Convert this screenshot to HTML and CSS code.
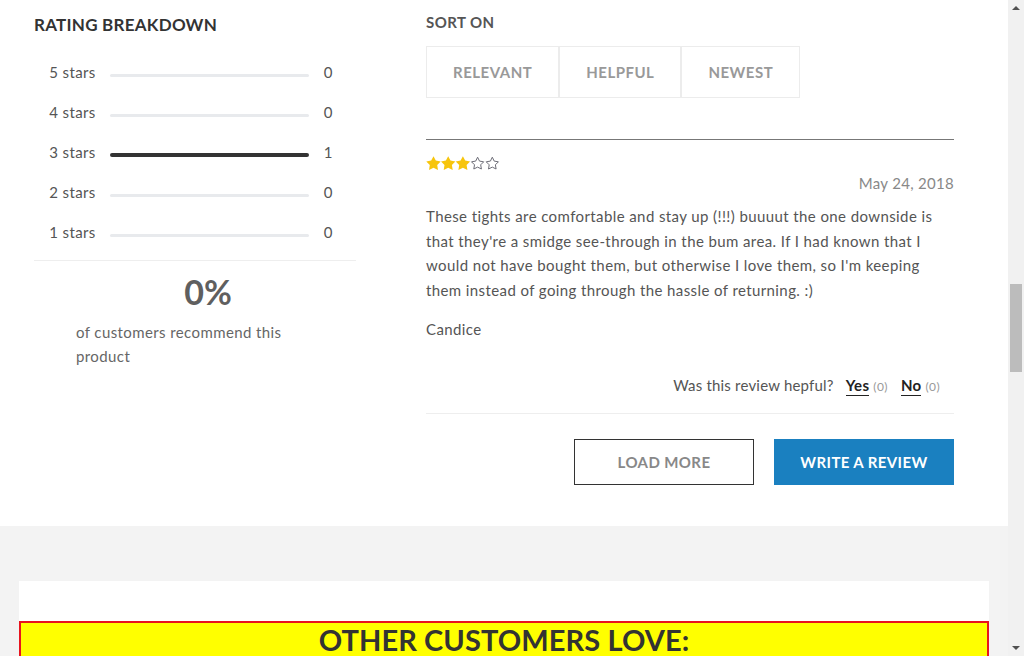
FILE: index.html
```html
<!DOCTYPE html>
<html lang="en">
<head>
<meta charset="utf-8">
<title>Reviews</title>
<link rel="stylesheet" href="styles.css">
</head>
<body>
<div class="viewport">
  <main class="page">
    <section class="reviews">
      <div class="breakdown">
        <h2 class="breakdown-title">RATING BREAKDOWN</h2>
        <div class="rows">
          <div class="row"><span class="row-label">5 stars</span><span class="bar"></span><span class="row-count">0</span></div>
          <div class="row"><span class="row-label">4 stars</span><span class="bar"></span><span class="row-count">0</span></div>
          <div class="row"><span class="row-label">3 stars</span><span class="bar bar-full"></span><span class="row-count">1</span></div>
          <div class="row"><span class="row-label">2 stars</span><span class="bar"></span><span class="row-count">0</span></div>
          <div class="row"><span class="row-label">1 stars</span><span class="bar"></span><span class="row-count">0</span></div>
        </div>
        <div class="recommend">
          <div class="recommend-pct">0%</div>
          <p class="recommend-text">of customers recommend this product</p>
        </div>
      </div>
      <div class="review-list">
        <h3 class="sort-title">SORT ON</h3>
        <div class="sort-buttons">
          <button class="sort-btn">RELEVANT</button><button class="sort-btn">HELPFUL</button><button class="sort-btn">NEWEST</button>
        </div>
        <article class="review">
          <div class="stars">
            <svg width="75" height="15" viewBox="0 0 75 15">
              <defs>
                <path id="star" d="M7.5 0.2 L9.8 4.6 L14.7 5.4 L11.2 9 L12 13.9 L7.5 11.7 L3 13.9 L3.8 9 L0.3 5.4 L5.2 4.6 Z"/>
                <path id="star-o" d="M7.5 1.2 L9.4 5.1 L13.6 5.8 L10.6 8.8 L11.3 13 L7.5 11.1 L3.7 13 L4.4 8.8 L1.4 5.8 L5.6 5.1 Z"/>
              </defs>
              <use href="#star" x="0" fill="#f7c50d"/>
              <use href="#star" x="14.7" fill="#f7c50d"/>
              <use href="#star" x="29.4" fill="#f7c50d"/>
              <use href="#star-o" x="44.1" fill="#fff" stroke="#6e6e78" stroke-width="1"/>
              <use href="#star-o" x="58.8" fill="#fff" stroke="#6e6e78" stroke-width="1"/>
            </svg>
          </div>
          <div class="review-date">May 24, 2018</div>
          <p class="review-body">These tights are comfortable and stay up (!!!) buuuut the one downside is that they're a smidge see-through in the bum area. If I had known that I would not have bought them, but otherwise I love them, so I'm keeping them instead of going through the hassle of returning. :)</p>
          <p class="review-author">Candice</p>
          <div class="helpful">
            <span class="helpful-q">Was this review hepful?</span>
            <span class="vote"><span class="vote-word">Yes</span><span class="vote-count">(0)</span></span>
            <span class="vote"><span class="vote-word">No</span><span class="vote-count">(0)</span></span>
          </div>
        </article>
        <div class="actions">
          <button class="btn btn-outline">LOAD MORE</button>
          <button class="btn btn-primary">WRITE A REVIEW</button>
        </div>
      </div>
    </section>
    <section class="more">
      <div class="more-card">
        <h2 class="more-title">OTHER CUSTOMERS LOVE:</h2>
      </div>
    </section>
  </main>
  <div class="scrollbar">
    <span class="sb-arrow sb-up"></span>
    <div class="sb-track"><span class="sb-thumb"></span></div>
    <span class="sb-arrow sb-down"></span>
  </div>
</div>
</body>
</html>
```

FILE: styles.css
```css
* { box-sizing: border-box; }
html, body { margin: 0; padding: 0; height: 100%; overflow: hidden; }
body {
  font-family: "Lato", "Liberation Sans", sans-serif;
  color: #555;
  background: #f3f3f3;
  letter-spacing: 0.4px;
}
.viewport { display: flex; height: 656px; width: 1024px; }
.page { width: 1008px; flex: none; }

.reviews {
  background: #fff;
  display: grid;
  grid-template-columns: 322px 1fr;
  column-gap: 70px;
  padding: 0 54px 40px 34px;
  height: 526px;
}

/* left column */
.breakdown-title {
  margin: 14px 0 0;
  font-size: 17px;
  line-height: 22px;
  font-weight: 700;
  color: #333;
  letter-spacing: 0.25px;
}
.rows { margin-top: 16px; }
.row {
  height: 40px;
  display: flex;
  align-items: center;
  justify-content: center;
  padding-right: 8px;
  font-size: 15px;
  color: #555;
}
.row-label { white-space: nowrap; }
.bar {
  width: 199px;
  height: 3px;
  border-radius: 2px;
  background: #e8eaed;
  margin: 6px 15px 0 14px;
}
.bar-full { background: #333; height: 4px; }
.row-count { min-width: 8px; }
.recommend {
  margin-top: 8px;
  border-top: 1px solid #eee;
}
.recommend-pct {
  margin-top: 11px;
  text-align: center;
  padding-left: 26px;
  font-size: 34px;
  line-height: 40px;
  font-weight: 700;
  color: #5f5f5f;
  letter-spacing: 0;
}
.recommend-text {
  margin: 8px 0 0 42px;
  width: 240px;
  font-size: 15px;
  line-height: 24px;
  color: #666;
}

/* right column */
.sort-title {
  margin: 12px 0 0;
  font-size: 15px;
  line-height: 20px;
  font-weight: 700;
  color: #555;
  letter-spacing: 0.4px;
}
.sort-buttons { display: flex; margin-top: 14px; }
.sort-btn {
  height: 52px;
  padding: 0 26px;
  border: 1px solid #ececec;
  background: #fff;
  font-family: inherit;
  font-size: 15px;
  font-weight: 700;
  color: #999;
  letter-spacing: 0.5px;
}
.review {
  margin-top: 41px;
  border-top: 1px solid #777;
}
.stars { margin-top: 16px; height: 15px; }
.stars svg { display: block; }
.review-date {
  margin-top: 2px;
  text-align: right;
  font-size: 15px;
  line-height: 20px;
  color: #888;
  letter-spacing: 0.3px;
}
.review-body {
  margin: 11px 0 0;
  font-size: 15px;
  line-height: 24.5px;
  color: #555;
}
.review-author {
  margin: 15px 0 0;
  font-size: 15px;
  line-height: 24px;
  color: #555;
}
.helpful {
  margin-top: 34px;
  height: 39px;
  display: flex;
  justify-content: flex-end;
  align-items: flex-start;
  gap: 12px;
  padding-right: 14px;
  border-bottom: 1px solid #eee;
  font-size: 15px;
  line-height: 20px;
}
.helpful-q { color: #555; letter-spacing: 0.2px; }
.vote { display: flex; align-items: baseline; gap: 4px; }
.vote + .vote { margin-left: 1px; }
.vote-word {
  font-weight: 700;
  color: #222;
  border-bottom: 1px solid #222;
  letter-spacing: 0.3px;
}
.vote-count { font-size: 12px; color: #999; letter-spacing: 0.4px; }
.actions {
  display: flex;
  justify-content: flex-end;
  gap: 20px;
  margin-top: 25px;
}
.btn {
  width: 180px;
  height: 46px;
  font-family: inherit;
  font-size: 15px;
  font-weight: 700;
  letter-spacing: 0.4px;
}
.btn-outline { background: #fff; border: 1px solid #333; color: #888; }
.btn-primary { background: #1a80c0; border: 1px solid #1a80c0; color: #fff; }

/* lower section */
.more { padding: 55px 19px 0; }
.more-card { background: #fff; padding-top: 40px; }
.more-title {
  margin: 0;
  background: #ffff00;
  border: 2px solid #e8141e;
  text-align: center;
  font-size: 29px;
  line-height: 34px;
  font-weight: 700;
  color: #333;
  letter-spacing: 0.1px;
}

/* scrollbar */
.scrollbar {
  width: 16px;
  flex: none;
  background: #f1f1f1;
  display: flex;
  flex-direction: column;
  align-items: center;
}
.sb-arrow { width: 0; height: 0; border-left: 4px solid transparent; border-right: 4px solid transparent; flex: none; }
.sb-up { border-bottom: 4px solid #505050; margin: 6px 0 6px; }
.sb-down { border-top: 4px solid #505050; margin: 6px 0 6px; }
.sb-track { flex: 1; width: 100%; padding: 268px 2px 0; }
.sb-thumb { display: block; height: 88px; background: #bcbcbc; }
```
